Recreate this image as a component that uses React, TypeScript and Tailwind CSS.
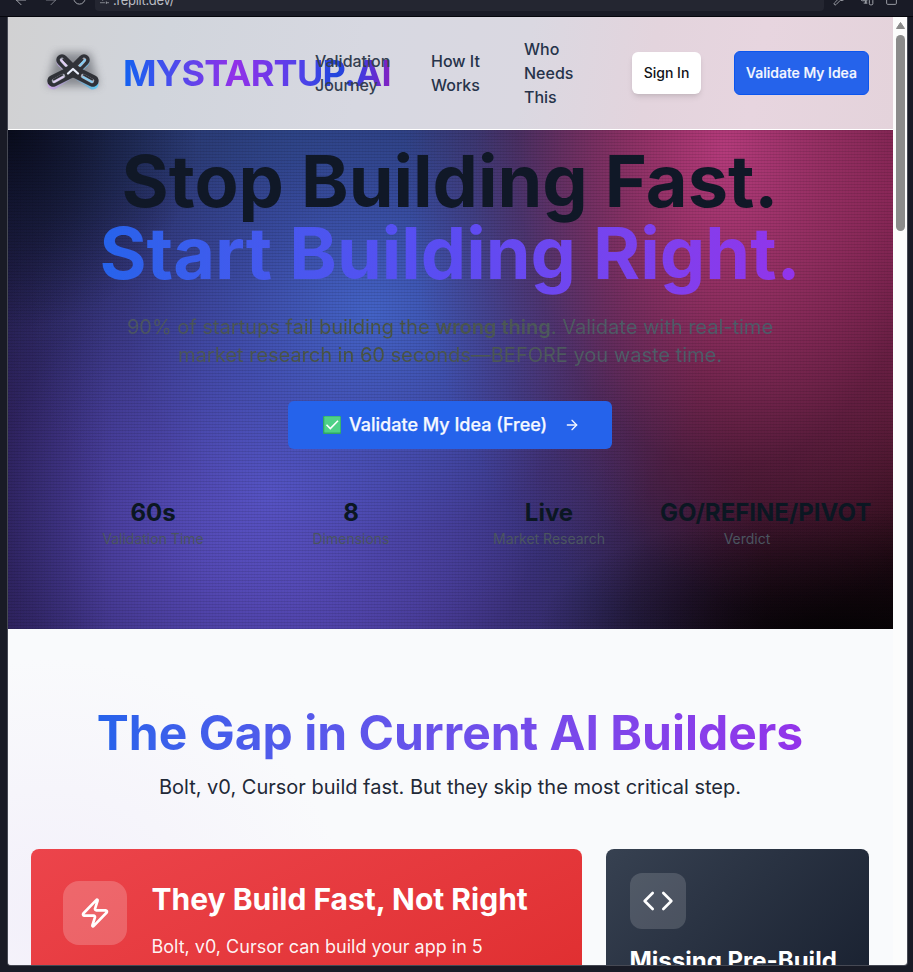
import type { ReactNode } from 'react';
import { ArrowLeft, ArrowRight, Code, RotateCw, SlidersHorizontal, Wrench, MonitorSmartphone, SquareArrowOutUpRight, Zap } from 'lucide-react';

function BrowserBar() {
  return (
    <div className="flex h-[17px] shrink-0 items-end overflow-hidden border-b border-[#05060c] bg-[#191b26] text-[#a3a6ad]">
      <div className="flex h-full w-[95px] shrink-0 items-start pl-[13px]">
        <ArrowLeft size={16} strokeWidth={1.5} className="-mt-[8px]" />
        <ArrowRight size={16} strokeWidth={1.5} className="-mt-[8px] ml-[14px] text-[#7a7d86]" />
        <RotateCw size={15} strokeWidth={1.6} className="-mt-[9px] ml-[13px]" />
      </div>
      <div className="flex h-full w-[729px] shrink-0 items-start pb-[5px]">
        <div className="flex h-[11px] w-full items-start rounded-b bg-[#242631] pl-[4px]">
          <SlidersHorizontal size={11} strokeWidth={1.6} className="-mt-[6px]" />
          <span className="-mt-[10px] ml-[3px] text-[13px] leading-[20px] tracking-[-0.3px] text-[#b9bcc3]">.replit.dev/</span>
        </div>
      </div>
      <div className="flex h-full items-start pl-[9px]">
        <Wrench size={13} strokeWidth={1.7} className="-mt-[7px]" />
        <MonitorSmartphone size={14} strokeWidth={1.7} className="-mt-[8px] ml-[14px]" />
        <SquareArrowOutUpRight size={13} strokeWidth={1.7} className="-mt-[7px] ml-[11px]" />
      </div>
    </div>
  );
}

function Logo() {
  return (
    <svg viewBox="0 0 72 56" className="-ml-[8px] h-[56px] w-[72px] shrink-0">
      <defs>
        <filter id="soft" x="-30%" y="-30%" width="160%" height="160%">
          <feGaussianBlur stdDeviation="4" />
        </filter>
        <linearGradient id="sheen" gradientUnits="userSpaceOnUse" x1="12" x2="60" y1="0" y2="0">
          <stop offset="0" stopColor="#c9a9e6" />
          <stop offset="0.5" stopColor="#8d93ab" />
          <stop offset="1" stopColor="#62c8f2" />
        </linearGradient>
      </defs>
      <path d="M19 8h34l9 33H10z" fill="#555960" opacity="0.6" filter="url(#soft)" />
      <g fill="none" strokeLinecap="round" strokeLinejoin="round">
        <g stroke="url(#sheen)" strokeWidth="11">
          <path d="M25 17L35 26M47 17L37 26M16 39L30 30M56 39L42 30" />
        </g>
        <g stroke="#303238" strokeWidth="11.5">
          <path d="M25 15L36 26L56 36" />
          <path d="M47 15L36 26L16 36" />
        </g>
        <g stroke="#a6a9b5" strokeWidth="4.5">
          <path d="M25 15L29 19.5M47 15L43 19.5M17 36L26 31M55 36L46 31" />
        </g>
        <path d="M26.5 14.5L31 19M45.5 14.5L41 19M17 34.5L25 30M55 34.5L47 30" stroke="#303238" strokeWidth="2" />
        <path d="M24 15L29 20.5M17 37L26 32" stroke="#e0cff5" strokeWidth="2" />
        <path d="M48 15L43 20.5M55 37L46 32" stroke="#86cdf2" strokeWidth="2" />
        <path d="M31 28.5L36 24L41 28.5" stroke="#e9eefc" strokeWidth="2.3" />
      </g>
    </svg>
  );
}

function Header() {
  return (
    <header className="flex h-[113px] shrink-0 items-center border-b border-white bg-[linear-gradient(100deg,#d1d1d2_0%,#d1d5dc_18%,#d7d8e1_40%,#dad8e1_58%,#e3d4dd_72%,#e7d5df_84%,#e4d3db_100%)] pl-[37px]">
      <div className="flex w-[270px] shrink-0 items-center">
        <Logo />
        <span className="ml-[14px] bg-[linear-gradient(90deg,#1262f0_0%,#9230e8_42%,#5142ea_66%,#2045dd_80%,#4a38dc_90%,#8420c0_100%)] bg-clip-text text-[36px] leading-[40px] font-bold tracking-[-0.7px] whitespace-nowrap text-transparent">
          MYSTARTUP.AI
        </span>
      </div>
      <nav className="flex shrink-0 items-center text-base font-medium text-[#26334a]">
        <a className="relative w-[116px] text-[#343e50]">Validation<br />Journey</a>
        <a className="w-[93px]">How It<br />Works</a>
        <a className="w-[108px]">Who<br />Needs<br />This</a>
      </nav>
      <button className="h-[42px] w-[69px] shrink-0 rounded-md bg-white text-sm font-medium text-[#111318] shadow-md">Sign In</button>
      <button className="ml-[33px] h-[44px] w-[135px] shrink-0 rounded-md border border-[#0b55ee] bg-[#2563eb] text-sm font-medium whitespace-nowrap text-[#f5f8ff] [-webkit-text-stroke:0.2px_#f5f8ff]">Validate My Idea</button>
    </header>
  );
}

function Stat({ value, label }: { value: string; label: string }) {
  return (
    <div className="flex w-[174px] flex-col items-start">
      <div className="min-w-full text-center text-2xl font-bold whitespace-nowrap text-[#0b1722]">{value}</div>
      <div className="w-full text-center text-sm leading-5 text-[#4b5560]">{label}</div>
    </div>
  );
}

function CheckBox() {
  return (
    <svg viewBox="0 0 18 18" className="size-[18px]">
      <rect width="18" height="18" rx="1" fill="#2fa866" />
      <rect x="1.3" y="0.6" width="16" height="15.8" rx="0.6" fill="#4fd187" />
      <path d="M3.5 8.8L7.3 12.6L15 4.8" fill="none" stroke="#fff" strokeWidth="1.6" />
    </svg>
  );
}

function Hero() {
  return (
    <section className="flex h-[499px] shrink-0 flex-col items-center bg-[repeating-linear-gradient(0deg,rgba(0,0,0,0.10)_0_1px,transparent_1px_3px),repeating-linear-gradient(90deg,rgba(0,0,0,0.03)_0_1px,transparent_1px_3px),radial-gradient(ellipse_190px_200px_at_0%_0%,rgba(4,7,18,0.85),transparent),linear-gradient(90deg,rgba(10,6,30,0.2)_0px,transparent_100px),radial-gradient(ellipse_300px_120px_at_830px_499px,rgba(4,2,4,0.8)_0%,rgba(6,3,8,0.4)_50%,transparent_100%),radial-gradient(ellipse_320px_490px_at_717px_20px,rgba(184,60,126,0.95)_0%,rgba(158,52,108,0.72)_32%,rgba(110,38,84,0.38)_65%,transparent_100%),radial-gradient(ellipse_340px_310px_at_362px_185px,rgba(68,102,204,0.92)_0%,rgba(62,86,184,0.58)_40%,rgba(58,66,150,0.24)_72%,transparent_100%),radial-gradient(ellipse_380px_340px_at_262px_365px,rgba(98,88,212,0.98)_0%,rgba(84,74,184,0.72)_35%,rgba(64,54,140,0.32)_72%,transparent_100%),radial-gradient(ellipse_420px_450px_at_885px_60px,rgba(146,34,82,0.95)_0%,rgba(116,32,66,0.72)_50%,transparent_100%),radial-gradient(ellipse_600px_330px_at_280px_0px,rgba(38,64,118,0.98),transparent),radial-gradient(ellipse_470px_400px_at_290px_450px,rgba(88,68,172,0.9)_0%,rgba(62,50,130,0.65)_50%,transparent_100%),linear-gradient(90deg,#2b1a4a_0%,#2c2458_45%,#24203c_64%,#1a0c18_80%,#0a0406_100%)] pt-[15px] pr-px">
      <h1 className="flex flex-col items-center text-[72px] leading-[72px] font-bold whitespace-nowrap">
        <span className="text-[#101827]">Stop Building Fast.</span>
        <span className="bg-gradient-to-r from-[#2563eb] via-[#5b4cf2] to-[#9333ea] bg-clip-text pb-[10px] text-transparent">Start Building Right.</span>
      </h1>
      <p className="mt-[14px] bg-[linear-gradient(90deg,#4b5563_0%,#4b5650_15%,#48533c_35%,#4b5650_55%,#4e5c66_75%,#4b5d69_100%)] bg-clip-text text-center text-xl leading-7 whitespace-nowrap text-transparent">
        90% of startups fail building the <b className="font-semibold">wrong thing</b>. Validate with real-time<br />
        market research in 60 seconds—BEFORE you waste time.
      </p>
      <button className="mt-[32px] flex h-[48px] w-[324px] shrink-0 items-center rounded-md bg-[#2563eb] pl-[35px] text-lg font-medium whitespace-nowrap text-[#f5f8ff]">
        <CheckBox />
        <span className="ml-[8px] [-webkit-text-stroke:0.25px_#f5f8ff]">Validate My Idea (Free)</span>
        <ArrowRight size={16} strokeWidth={2} className="ml-[17px]" />
      </button>
      <div className="mt-[48px] flex w-[768px] gap-6">
        <Stat value="60s" label="Validation Time" />
        <Stat value="8" label="Dimensions" />
        <Stat value="Live" label="Market Research" />
        <Stat value="GO/REFINE/PIVOT" label="Verdict" />
      </div>
    </section>
  );
}

function IconTile({ children, size }: { children: ReactNode; size: string }) {
  return <div className={`flex shrink-0 items-center justify-center text-white ${size}`}>{children}</div>;
}

function Gap() {
  return (
    <section className="flex flex-1 flex-col items-center overflow-hidden bg-[radial-gradient(ellipse_300px_260px_at_40px_290px,#f3f0fa,transparent),linear-gradient(#f9fafc,#f9fafc)] pt-[80px] pr-px">
      <h2 className="bg-gradient-to-r from-[#2563eb] to-[#9333ea] bg-clip-text text-5xl leading-[48px] font-bold whitespace-nowrap text-transparent">
        <span className="inline-block h-[58px] leading-[48px]">The Gap in Current AI Builders</span>
      </h2>
      <p className="mt-[6px] text-xl leading-7 whitespace-nowrap text-[#1f2937]">Bolt, v0, Cursor build fast. But they skip the most critical step.</p>
      <div className="mt-[48px] flex w-[839px] shrink-0 gap-6">
        <article className="flex h-[260px] w-[551px] shrink-0 gap-[25px] rounded-lg bg-linear-to-br from-[#ec444b] to-[#dc2626] p-8 text-white">
          <IconTile size="size-16 rounded-2xl bg-white/20"><Zap size={32} strokeWidth={2} /></IconTile>
          <div className="whitespace-nowrap">
            <h3 className="text-3xl leading-9 font-bold">They Build Fast, Not Right</h3>
            <p className="mt-[15px] text-lg leading-[29px] text-white/95">Bolt, v0, Cursor can build your app in 5</p>
          </div>
        </article>
        <article className="h-[260px] w-[263px] shrink-0 rounded-lg bg-linear-to-br from-[#374151] to-[#111827] p-6 text-white">
          <IconTile size="size-14 rounded-xl bg-white/15"><Code size={32} strokeWidth={2} /></IconTile>
          <h3 className="mt-[16px] text-2xl font-bold whitespace-nowrap">Missing Pre-Build</h3>
        </article>
      </div>
    </section>
  );
}

function Scrollbar() {
  return (
    <div className="flex w-[14px] shrink-0 flex-col items-center bg-[#fcfcfc] pt-[5px]">
      <svg viewBox="0 0 9 7" className="h-[7px] w-[9px]"><path d="M4.5 0.5L8.5 6.5H0.5Z" fill="#898989" stroke="#898989" strokeLinejoin="round" /></svg>
      <div className="mt-[6px] h-[196px] w-[9px] rounded-full bg-[#8b8b8b]" />
    </div>
  );
}

export default function App() {
  return (
    <div className="flex h-[972px] w-[913px] flex-col overflow-hidden bg-[#191b26] font-['Inter','Liberation_Sans',sans-serif]">
      <BrowserBar />
      <div className="ml-[7px] flex h-[949px] w-[901px] shrink-0 overflow-hidden rounded-b border border-t-0 border-[#464954]">
        <main className="flex w-[885px] shrink-0 flex-col">
          <Header />
          <Hero />
          <Gap />
        </main>
        <Scrollbar />
      </div>
    </div>
  );
}
